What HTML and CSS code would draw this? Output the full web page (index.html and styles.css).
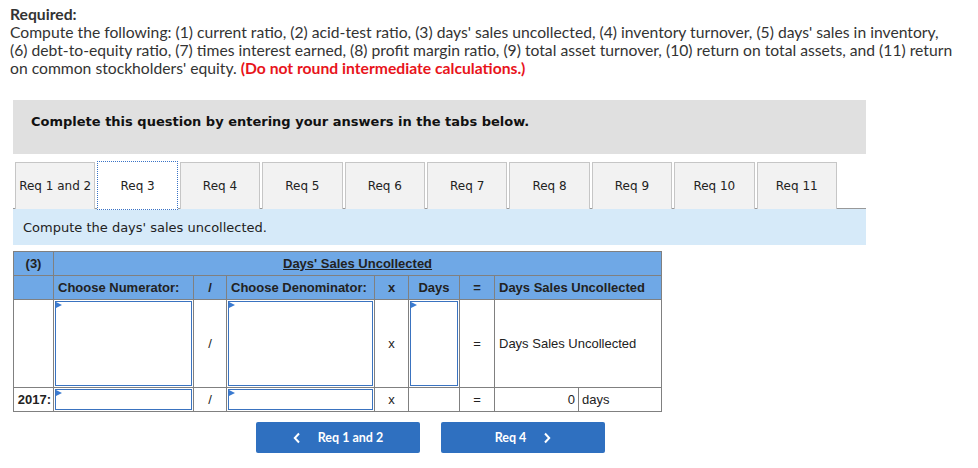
FILE: index.html
```html
<!DOCTYPE html>
<html>
<head>
<meta charset="utf-8">
<link rel="stylesheet" href="styles.css">
</head>
<body>
<div class="page">
  <div class="required">
    <div class="req-title">Required:</div>
    <p class="req-text">Compute the following: (1) current ratio, (2) acid-test ratio, (3) days' sales uncollected, (4) inventory turnover, (5) days' sales in inventory, (6) debt-to-equity ratio, (7) times interest earned, (8) profit margin ratio, (9) total asset turnover, (10) return on total assets, and (11) return on common stockholders' equity. <span class="warn">(Do not round intermediate calculations.)</span></p>
  </div>

  <div class="instruct">Complete this question by entering your answers in the tabs below.</div>

  <div class="tabs">
    <div class="tab">Req 1 and 2</div>
    <div class="tab active">Req 3</div>
    <div class="tab">Req 4</div>
    <div class="tab">Req 5</div>
    <div class="tab">Req 6</div>
    <div class="tab">Req 7</div>
    <div class="tab">Req 8</div>
    <div class="tab">Req 9</div>
    <div class="tab">Req 10</div>
    <div class="tab">Req 11</div>
  </div>

  <div class="band">Compute the days' sales uncollected.</div>

  <table class="grid">
    <colgroup>
      <col class="c1"><col class="c2"><col class="c3"><col class="c4"><col class="c5"><col class="c6"><col class="c7"><col class="c8"><col class="c9">
    </colgroup>
    <tr class="h1">
      <th>(3)</th>
      <th colspan="8" class="title"><u>Days' Sales Uncollected</u></th>
    </tr>
    <tr class="h2">
      <th></th>
      <th class="left">Choose Numerator:</th>
      <th>/</th>
      <th class="left">Choose Denominator:</th>
      <th>x</th>
      <th>Days</th>
      <th>=</th>
      <th colspan="2" class="left">Days Sales Uncollected</th>
    </tr>
    <tr class="r1">
      <td></td>
      <td class="inp"><div class="box"></div></td>
      <td class="op">/</td>
      <td class="inp"><div class="box"></div></td>
      <td class="op">x</td>
      <td class="inp"><div class="box"></div></td>
      <td class="op">=</td>
      <td colspan="2" class="label">Days Sales Uncollected</td>
    </tr>
    <tr class="r2">
      <td class="yr">2017:</td>
      <td class="inp"><div class="box"></div></td>
      <td class="op">/</td>
      <td class="inp"><div class="box"></div></td>
      <td class="op">x</td>
      <td></td>
      <td class="op">=</td>
      <td class="num">0</td>
      <td class="unit">days</td>
    </tr>
  </table>

  <div class="nav">
    <button class="btn"><svg class="chev" width="8" height="12" viewBox="0 0 8 12"><path d="M6 1.5 L1.8 6 L6 10.5" fill="none" stroke="#fff" stroke-width="2"/></svg><span>Req 1 and 2</span></button>
    <button class="btn next"><span>Req 4</span><svg class="chev" width="8" height="12" viewBox="0 0 8 12"><path d="M2 1.5 L6.2 6 L2 10.5" fill="none" stroke="#fff" stroke-width="2"/></svg></button>
  </div>
</div>
</body>
</html>
```

FILE: styles.css
```css
* { box-sizing: border-box; }
html, body { margin: 0; padding: 0; background: #fff; }
.page { padding: 5px 0 0 0; color: #222; }

.required { padding-left: 10px; width: 957px; font-family: "Lato", "Open Sans", sans-serif; font-size: 15.7px; line-height: 18px; color: #333; }
.req-title { font-weight: 700; }
.req-text { margin: 0; }
.warn { color: #e8141b; font-weight: 700; }

.instruct {
  margin: 23px 0 0 13px; width: 853px; height: 54px;
  background: #e0e0e0;
  font-family: "DejaVu Sans", Verdana, sans-serif; font-weight: 700; font-size: 13px; line-height: 16px;
  color: #111; padding: 14px 0 0 18px;
}

.tabs {
  margin: 7px 0 0 13px; width: 853px; height: 48px;
  display: flex; gap: 2px; padding-left: 2px;
  border-bottom: 1px solid #999; align-items: flex-end;
}
.tab {
  width: 80.4px; height: 47px; margin-bottom: -1px; flex: none;
  background: #f2f2f2; border: 1px solid #c6c6c6; border-bottom: none;
  font-family: "DejaVu Sans", Verdana, sans-serif; font-size: 12px; color: #222;
  display: flex; align-items: center; justify-content: center; white-space: nowrap;
}
.tab.active { background: #fff; border: 1px dotted #3a73c6; height: 49px; margin-bottom: -2px; position: relative; }

.band {
  margin-left: 13px; width: 853px; height: 36px;
  background: #d6eaf9; font-family: "DejaVu Sans", Verdana, sans-serif; font-size: 13px; color: #222;
  padding-left: 10px; display: flex; align-items: center;
}

.grid {
  margin: 6px 0 0 13px; border-collapse: collapse; table-layout: fixed; width: 648px;
  font-family: "Liberation Sans", Arial, sans-serif; font-size: 13px; color: #222;
}
.grid td, .grid th { border: 1px solid #808080; padding: 0; }
.c1 { width: 40px; } .c2 { width: 140px; } .c3 { width: 33px; } .c4 { width: 148px; }
.c5 { width: 34px; } .c6 { width: 51px; } .c7 { width: 35px; } .c8 { width: 84px; } .c9 { width: 83px; }
.grid th { background: #6fa8e6; font-weight: 700; text-align: center; color: #222; }
.grid th.left { text-align: left; padding-left: 4px; }
.grid th.title u { text-decoration: underline; }
.h1 { height: 24px; } .h2 { height: 24px; }
.r1 { height: 88px; } .r2 { height: 24px; }
.op { text-align: center; }
.label { padding-left: 4px !important; }
.yr { font-weight: 700; text-align: right; padding-right: 2px !important; }
.num { text-align: right; padding-right: 3px !important; }
.unit { padding-left: 3px !important; }
.inp { position: relative; }
.box {
  position: absolute; left: 1px; top: 1px; right: 1px; bottom: 1px;
  border: 1px solid #3a73c0; background: #fff;
}
.box::before {
  content: ""; position: absolute; left: 0; top: 0;
  border-left: 6px solid #3a7ad0; border-top: 3px solid transparent; border-bottom: 3px solid transparent;
}

.nav { display: flex; gap: 21px; margin: 10px 0 0 256px; }
.btn {
  width: 164px; height: 31px; border: none; border-radius: 2px; background: #2f70c0; color: #fff;
  font-family: "Lato", "Open Sans", sans-serif; font-weight: 700; font-size: 12.5px;
  display: flex; align-items: center; justify-content: center; gap: 17px; padding: 0;
}
.chev { display: block; }
```
